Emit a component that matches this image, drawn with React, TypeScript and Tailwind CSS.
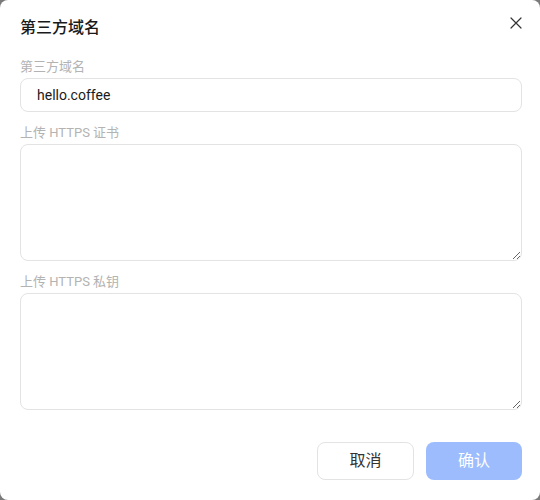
import React from "react";

export default function App() {
  const font = { fontFamily: '"Roboto", "Noto Sans CJK SC", sans-serif' };
  return (
    <div className="w-[540px] h-[500px] bg-[#7a7a7a]" style={font}>
      <div className="w-full h-full bg-white rounded-[8px] pl-5 pr-[18px] pt-4 flex flex-col">
        <div className="flex items-center justify-between h-6">
          <h2 className="text-[16px] leading-6 font-medium text-[#1a1a1a]">第三方域名</h2>
          <button className="w-6 h-6 flex items-center justify-center -mr-[6px] -mt-[11px]">
            <svg width="12" height="12" viewBox="0 0 12 12" fill="none" stroke="#333" strokeWidth="1.2" strokeLinecap="round">
              <path d="M1 1 L11 11 M11 1 L1 11" />
            </svg>
          </button>
        </div>
        <label className="mt-[17px] text-[13px] leading-5 text-[#b3b3b3]">第三方域名</label>
        <input
          className="mt-[1px] h-[34px] w-full rounded-[8px] border border-[#e3e3e3] px-4 text-[14px] text-[#1a1a1a] outline-none"
          defaultValue="hello.coffee"
        />
        <label className="mt-[11px] text-[13px] leading-5 text-[#b3b3b3]">上传 HTTPS 证书</label>
        <textarea className="mt-[1px] h-[117px] w-full rounded-[8px] border border-[#e3e3e3] px-4 py-2 text-[14px] outline-none" />
        <label className="mt-[11px] text-[13px] leading-5 text-[#b3b3b3]">上传 HTTPS 私钥</label>
        <textarea className="mt-[1px] h-[117px] w-full rounded-[8px] border border-[#e3e3e3] px-4 py-2 text-[14px] outline-none" />
        <div className="mt-[32px] flex justify-end gap-3">
          <button className="w-[97px] h-[38px] rounded-[8px] border border-[#e3e3e3] bg-white text-[16px] text-[#333]">取消</button>
          <button className="w-[96px] h-[38px] rounded-[8px] bg-[#9cbcfd] text-[16px] text-white">确认</button>
        </div>
      </div>
    </div>
  );
}
